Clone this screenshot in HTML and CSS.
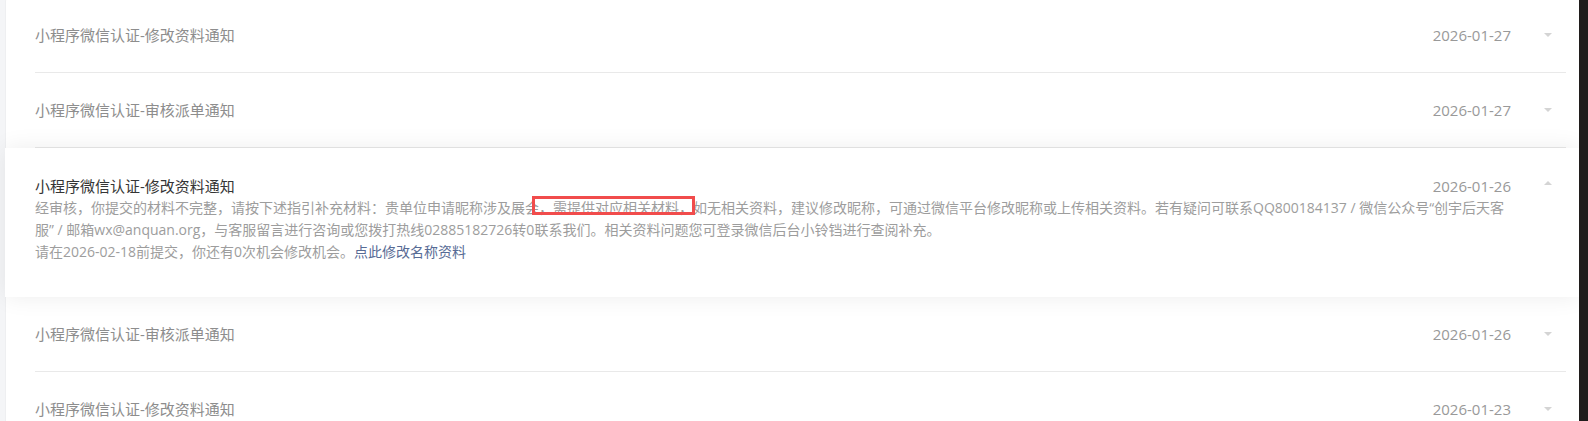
FILE: index.html
```html
<!DOCTYPE html>
<html lang="zh-CN">
<head>
<meta charset="utf-8">
<title>通知列表</title>
<link rel="stylesheet" href="styles.css">
</head>
<body>
<div class="page">
  <div class="main">
    <div class="list">
      <div class="row">
        <span class="title">小程序微信认证-修改资料通知</span>
        <span class="date">2026-01-27</span>
        <span class="caret down"></span>
      </div>
      <div class="row">
        <span class="title">小程序微信认证-审核派单通知</span>
        <span class="date">2026-01-27</span>
        <span class="caret down"></span>
      </div>
      <div class="card">
        <div class="card-head">
          <span class="card-title">小程序微信认证-修改资料通知</span>
          <span class="date">2026-01-26</span>
          <span class="caret up"></span>
        </div>
        <p class="body">经审核，你提交的材料不完整，请按下述指引补充材料：贵单位申请昵称涉及展会<span class="mark">，需提供对应相关材料，</span>如无相关资料，建议修改昵称，可通过微信平台修改昵称或上传相关资料。若有疑问可联系QQ800184137 / 微信公众号“创宇后天客<br>服” / 邮箱wx@anquan.org，与客服留言进行咨询或您拨打热线02885182726转0联系我们。相关资料问题您可登录微信后台小铃铛进行查阅补充。</p>
        <p class="body">请在2026-02-18前提交，你还有0次机会修改机会。<a class="link" href="#">点此修改名称资料</a></p>
      </div>
      <div class="row">
        <span class="title">小程序微信认证-审核派单通知</span>
        <span class="date">2026-01-26</span>
        <span class="caret down"></span>
      </div>
      <div class="row">
        <span class="title">小程序微信认证-修改资料通知</span>
        <span class="date">2026-01-23</span>
        <span class="caret down"></span>
      </div>
    </div>
  </div>
  <div class="strip"></div>
</div>
</body>
</html>
```

FILE: styles.css
```css
html, body {
  margin: 0;
  padding: 0;
  height: 421px;
  overflow: hidden;
  background: #f4f5f7;
}

body {
  font-family: "Open Sans", "Noto Sans CJK SC", sans-serif;
}

.page {
  display: flex;
  height: 421px;
}

.main {
  flex: 1;
  padding-left: 5px;
  background: #f4f5f7;
  overflow: hidden;
}

.strip {
  width: 9px;
  background: #201d1c;
}

.list {
  margin-top: -2px;
  background: #fff;
  border-left: 1px solid #eeeff1;
  border-radius: 4px 0 0 0;
}

.row {
  display: flex;
  align-items: center;
  height: 74px;
  margin: 0 13px 0 29px;
  border-bottom: 1px solid #e9e9e9;
}

.row:last-child {
  border-bottom: none;
}

.title {
  flex: 1;
  font-size: 15px;
  line-height: 22px;
  color: #8d8d8d;
}

.date {
  font-size: 15px;
  line-height: 22px;
  color: #999;
}

.caret {
  width: 0;
  height: 0;
  margin-left: 33px;
  margin-right: 14px;
  border-left: 4px solid transparent;
  border-right: 4px solid transparent;
}

.caret.down {
  border-top: 4px solid #d4d4d4;
}

.caret.up {
  border-bottom: 4px solid #d4d4d4;
  margin-top: -6px;
}

.card {
  position: relative;
  z-index: 1;
  background: #fff;
  margin-left: -1px;
  padding: 27px 13px 34px 30px;
  box-shadow: 0 0 22px rgba(0, 0, 0, 0.075);
}

.card-head {
  display: flex;
  align-items: center;
  height: 22px;
}

.card-title {
  flex: 1;
  font-size: 15px;
  line-height: 22px;
  color: #353535;
}

.body {
  margin: 0;
  font-size: 14px;
  line-height: 22px;
  color: #9d9d9d;
  white-space: nowrap;
}

.mark {
  position: relative;
}

.mark::after {
  content: "";
  position: absolute;
  left: -7px;
  right: -2px;
  top: -2px;
  bottom: 2px;
  border: 3px solid #f14c4c;
}

.link {
  color: #576b95;
  text-decoration: none;
}
```
